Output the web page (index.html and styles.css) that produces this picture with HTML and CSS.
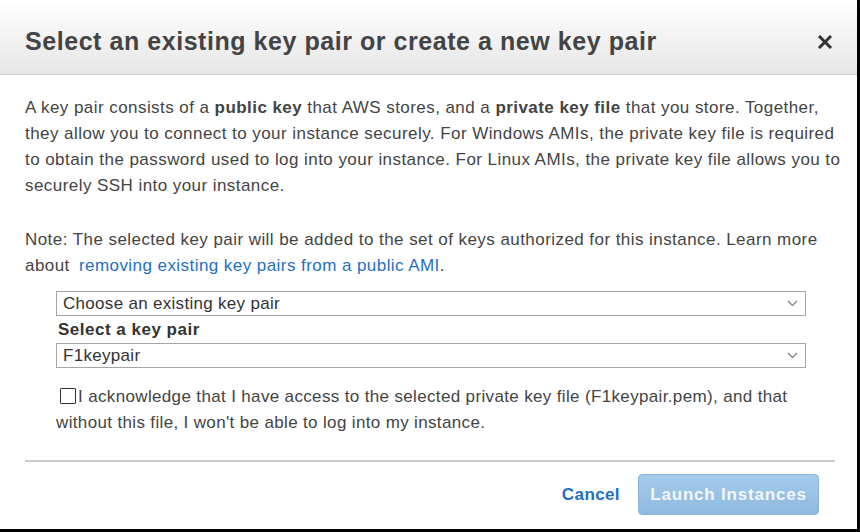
FILE: index.html
```html
<!DOCTYPE html>
<html>
<head>
<meta charset="utf-8">
<link rel="stylesheet" href="styles.css">
</head>
<body>
<div class="dialog">
  <div class="header">
    <h1 class="title">Select an existing key pair or create a new key pair</h1>
    <svg class="close" width="16" height="16" viewBox="0 0 16 16"><path d="M2 2L14 14M14 2L2 14" stroke="#333" stroke-width="3" fill="none"/></svg>
  </div>
  <div class="content">
    <p class="para">A key pair consists of a <b>public key</b> that AWS stores, and a <b>private key file</b> that you store. Together, they allow you to connect to your instance securely. For Windows AMIs, the private key file is required<br>to obtain the password used to log into your instance. For Linux AMIs, the private key file allows you to securely SSH into your instance.</p>
    <p class="para note">Note: The selected key pair will be added to the set of keys authorized for this instance. Learn more about <a class="link">removing existing key pairs from a public AMI</a>.</p>
    <div class="form">
      <div class="select"><span>Choose an existing key pair</span><svg width="11" height="7" viewBox="0 0 11 7"><path d="M1 1L5.5 5.5L10 1" stroke="#777" stroke-width="1.1" fill="none"/></svg></div>
      <div class="label">Select a key pair</div>
      <div class="select"><span>F1keypair</span><svg width="11" height="7" viewBox="0 0 11 7"><path d="M1 1L5.5 5.5L10 1" stroke="#777" stroke-width="1.1" fill="none"/></svg></div>
      <div class="ack"><span class="box"></span>I acknowledge that I have access to the selected private key file (F1keypair.pem), and that without this file, I won't be able to log into my instance.</div>
    </div>
  </div>
  <div class="footer">
    <a class="cancel">Cancel</a>
    <button class="launch">Launch Instances</button>
  </div>
</div>
</body>
</html>
```
FILE: styles.css
```css
html, body { margin: 0; padding: 0; background: #fff; }
.dialog {
  width: 860px; height: 532px; box-sizing: border-box;
  border-right: 3px solid #000; border-bottom: 3px solid #000;
  font-family: "Liberation Sans", Arial, sans-serif; color: #444;
  display: flex; flex-direction: column;
}
.header {
  height: 75px; box-sizing: border-box;
  background: linear-gradient(#ffffff, #e6e6e6);
  border-bottom: 1px solid #cfcfcf;
  display: flex; align-items: center; justify-content: space-between;
  padding: 9px 24px 0 25px;
}
.title { margin: 0; font-size: 25px; font-weight: bold; color: #444; letter-spacing: 0.55px; }
.close { display: block; }
.content { padding: 20px 10px 0 25px; font-size: 17px; line-height: 26px; letter-spacing: 0.44px; }
.para { margin: 0; }
.note { margin-top: 28px; }
.link { color: #1f6fc5; margin-left: 4px; }
.form { padding: 12px 0 0 31px; width: 750px; }
.select {
  height: 25px; box-sizing: border-box; border: 1px solid #a6a6a6;
  display: flex; align-items: center; justify-content: space-between;
  padding: 0 7px 0 6px; line-height: 20px; color: #333; letter-spacing: 0.3px;
}
.label { font-weight: bold; color: #333; line-height: 20px; padding: 4px 0 0 2px; height: 27px; box-sizing: border-box; letter-spacing: 0.5px; }
.ack { margin-top: 16px; line-height: 26px; color: #444; letter-spacing: 0.35px; }
.box {
  display: inline-block; width: 14px; height: 14px; border: 1px solid #333;
  vertical-align: -2px; margin: 0 2px 0 4px; border-radius: 1px;
}
.footer {
  margin: auto 22px 0 25px; border-top: 2px solid #cccccc;
  display: flex; justify-content: flex-end; align-items: center;
  padding: 12px 16px 14px 0; gap: 18px;
}
.cancel { color: #1f6fc5; font-weight: bold; font-size: 17px; letter-spacing: 0.4px; }
.launch {
  width: 181px; height: 41px; border: 1px solid #8ab6dc; border-radius: 4px;
  background: linear-gradient(#a3cbec, #8fb9de); color: #f2f7fc;
  font-family: "Liberation Sans", Arial, sans-serif; font-weight: bold; font-size: 17px; letter-spacing: 0.8px;
}
```
